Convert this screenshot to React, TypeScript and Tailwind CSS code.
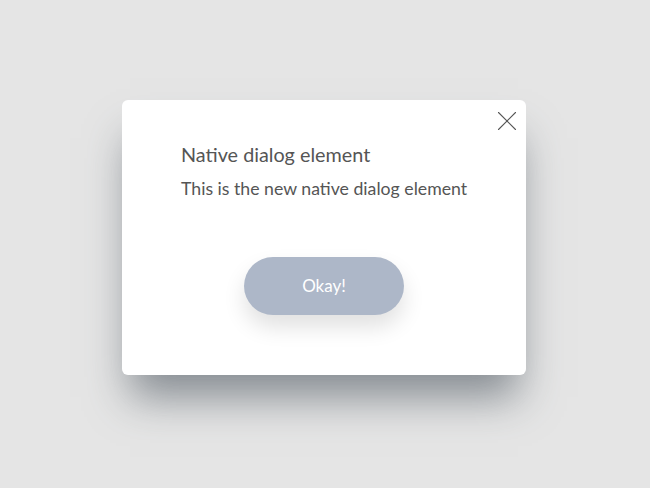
import { X } from 'lucide-react';

export default function App() {
  return (
    <div className="w-[650px] h-[488px] bg-[#e5e5e5] flex justify-center pt-[100px] pr-[2px]" style={{ fontFamily: 'Lato, "Open Sans", sans-serif' }}>
      <div className="relative w-[404px] h-[275px] bg-white rounded-[6px] shadow-[0_30px_40px_-8px_rgba(70,80,90,0.6)] flex flex-col">
        <button className="absolute right-[2px] top-[4px] text-[#555]" aria-label="Close">
          <X size={34} strokeWidth={0.75} />
        </button>
        <div className="pl-[59px] pt-[40px]">
          <h2 className="text-[19.8px] leading-[28px] text-[#555]">Native dialog element</h2>
          <p className="mt-[9px] text-[17.7px] leading-[24px] text-[#555]">This is the new native dialog element</p>
        </div>
        <div className="flex justify-center mt-[56px]">
          <button className="w-[160px] h-[58px] rounded-full bg-[#adb7c8] text-white text-[17px] shadow-[0_12px_22px_rgba(0,0,0,0.12)]">
            Okay!
          </button>
        </div>
      </div>
    </div>
  );
}
